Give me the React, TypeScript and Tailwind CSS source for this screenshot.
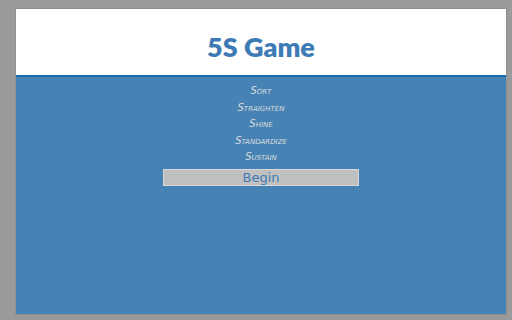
const steps = ["Sort", "Straighten", "Shine", "Standardize", "Sustain"];

export default function App() {
  return (
    <div className="h-[320px] w-[512px] bg-[#9a9a9a] pl-[15px] pr-[5px] pt-[8px]">
      <div className="flex h-[307px] w-[492px] flex-col border border-[#8f8f8f] bg-[#4682b4]">
        <header className="flex h-[68px] items-center justify-center border-b-2 border-[#1a6ca8] bg-white pt-[10px]">
          <h1 className="font-['Lato',sans-serif] text-[27px] font-extrabold text-[#3e7bb4]">5S Game</h1>
        </header>
        <ul className="mt-[7px] flex flex-col items-center gap-[2px]">
          {steps.map((step) => (
            <li
              key={step}
              className="h-[14.5px] font-['DejaVu_Sans',sans-serif] text-[10px] italic leading-[14.5px] text-[#dcdcdc] [font-variant:small-caps]"
            >
              {step}
            </li>
          ))}
        </ul>
        <button className="mx-auto mt-[4px] h-[17px] w-[196px] border border-[#d8d8d8] bg-[#c0c0c0] font-['DejaVu_Sans',sans-serif] text-[13px] leading-[15px] text-[#3e7bb4]">
          Begin
        </button>
      </div>
    </div>
  );
}
